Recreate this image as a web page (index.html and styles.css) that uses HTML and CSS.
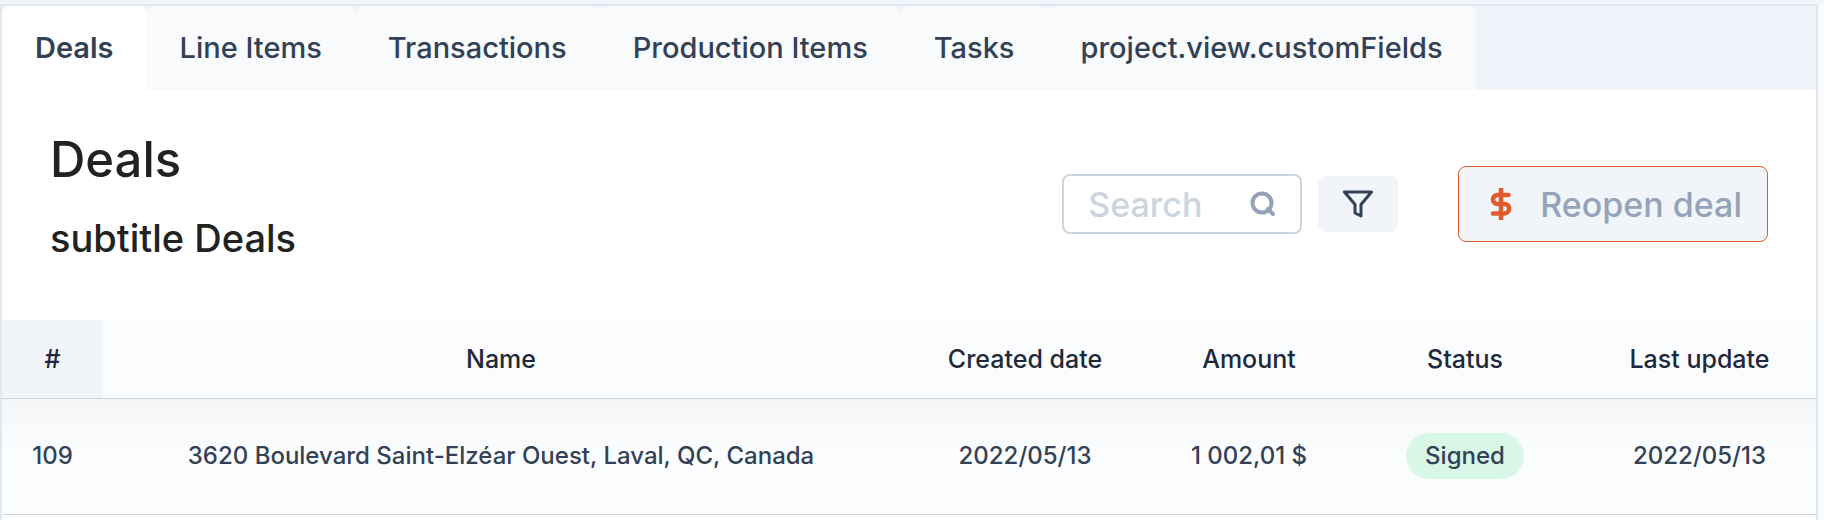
FILE: index.html
```html
<!DOCTYPE html>
<html lang="en">
<head>
  <meta charset="UTF-8">
  <meta name="viewport" content="width=device-width, initial-scale=1.0">
  <title>Deals</title>
  <link rel="stylesheet" href="styles.css">
</head>
<body>
  <main class="panel">
    <nav class="tabs">
      <a class="tab active" href="#deals">Deals</a>
      <a class="tab" href="#line-items">Line Items</a>
      <a class="tab" href="#transactions">Transactions</a>
      <a class="tab" href="#production-items">Production Items</a>
      <a class="tab" href="#tasks">Tasks</a>
      <a class="tab" href="#custom-fields">project.view.customFields</a>
    </nav>

    <header class="header">
      <div class="titles">
        <h1>Deals</h1>
        <h2>subtitle Deals</h2>
      </div>
      <div class="actions">
        <label class="search">
          <input type="search" placeholder="Search" aria-label="Search">
          <svg width="26" height="26" viewBox="0 0 26 26" fill="none" stroke="#94a3b8" stroke-width="4" stroke-linecap="round" aria-hidden="true">
            <circle cx="12" cy="12" r="9.5"/>
            <path d="M18 18l5 5"/>
          </svg>
        </label>
        <button class="filter" type="button" aria-label="Filter">
          <svg width="30" height="28" viewBox="0 0 30 28" fill="none" stroke="#334155" stroke-width="3" stroke-linejoin="round" aria-hidden="true">
            <path d="M1.5 2h27L18 14.500v11.500l-6-3v-8.500z"/>
          </svg>
        </button>
        <button class="reopen" type="button">
          <svg width="22" height="32" viewBox="0 0 22 32" fill="none" stroke="#e05a2b" stroke-width="4.500" aria-hidden="true">
            <path d="M11 0v32"/>
            <path d="M18.500 7H7.500a4.500 4.500 0 0 0 0 9h7a4.700 4.700 0 0 1 0 9.400H3" stroke-linecap="round" stroke-linejoin="round"/>
          </svg>
          Reopen deal
        </button>
      </div>
    </header>

    <table class="deals">
      <thead>
        <tr>
          <th class="col-id">#</th>
          <th>Name</th>
          <th class="col-created">Created date</th>
          <th class="col-amount">Amount</th>
          <th class="col-status">Status</th>
          <th class="col-update">Last update</th>
        </tr>
      </thead>
      <tbody>
        <tr>
          <td>109</td>
          <td>3620 Boulevard Saint-Elzéar Ouest, Laval, QC, Canada</td>
          <td>2022/05/13</td>
          <td>1 002,01 $</td>
          <td><span class="badge">Signed</span></td>
          <td>2022/05/13</td>
        </tr>
      </tbody>
    </table>
  </main>
</body>
</html>
```
FILE: styles.css
```css
* { box-sizing: border-box; }
body { margin: 0; padding-right: 6px; min-height: 100vh; display: flex; background: #fafbfd; border-top: 4px solid #f1f5fb; font-family: Inter, sans-serif; font-weight: 500; color: #334155; }
button, input { font: inherit; }

.panel { flex: 1; min-width: 0; background: #fff; border: 2px solid #e2e8f0; border-bottom: 0; }

.tabs { display: flex; background: #eff4fb; }
.tab { padding: 20px 33px; font-size: 29px; line-height: 44px; color: #334155; text-decoration: none; white-space: nowrap; background: #f8fafc; border-radius: 8px 8px 0 0; }
.tab.active { background: #fff; font-weight: 600; }

.header { display: flex; justify-content: space-between; align-items: center; padding: 32px 48px 54px; }
.titles { color: #222; }
h1, h2 { margin: 0; font-weight: 500; }
h1 { font-size: 49px; line-height: 76px; }
h2 { font-size: 38px; line-height: 56px; padding-top: 12px; }
.actions { display: flex; align-items: center; gap: 16px; padding-top: 20px; }

.search { display: flex; align-items: center; width: 240px; height: 60px; padding: 0 24px; border: 2px solid #cbd5e1; border-radius: 8px; font-size: 34px; }
.search input { flex: 1; min-width: 0; padding: 0; border: 0; outline: 0; background: none; color: #334155; }
.search input::placeholder { color: #cbd5e1; opacity: 1; }
.filter { display: flex; align-items: center; justify-content: center; width: 80px; height: 56px; padding: 0; border: 0; border-radius: 8px; background: #f1f5f9; }
.reopen { display: flex; align-items: center; gap: 28px; height: 76px; margin-left: 44px; padding: 0 25px 0 31px; border: 1px solid #e05a2b; border-radius: 8px; background: #f1f5f9; color: #94a3b8; font-size: 34px; white-space: nowrap; }

.deals { width: 100%; table-layout: fixed; border-collapse: collapse; font-size: 24px; line-height: 36px; text-align: center; }
.deals th { height: 78px; padding: 0; font-size: 25px; font-weight: 500; color: #1e293b; background: #fbfcfe; border-bottom: 1px solid #cbd5e1; }
.deals td { height: 116px; padding: 0; border-bottom: 1px solid #cbd5e1; white-space: nowrap; }
.deals tbody tr { background: linear-gradient(#f4f5f7, #fbfcfe 50px); }
.deals .col-id { width: 101px; background: #f1f5f9; }
.deals .col-created { width: 252px; }
.deals .col-amount { width: 196px; }
.deals .col-status { width: 236px; }
.deals .col-update { width: 233px; }
.badge { display: inline-block; padding: 5px 19px; border-radius: 24px; background: #d9f7e6; }
```
